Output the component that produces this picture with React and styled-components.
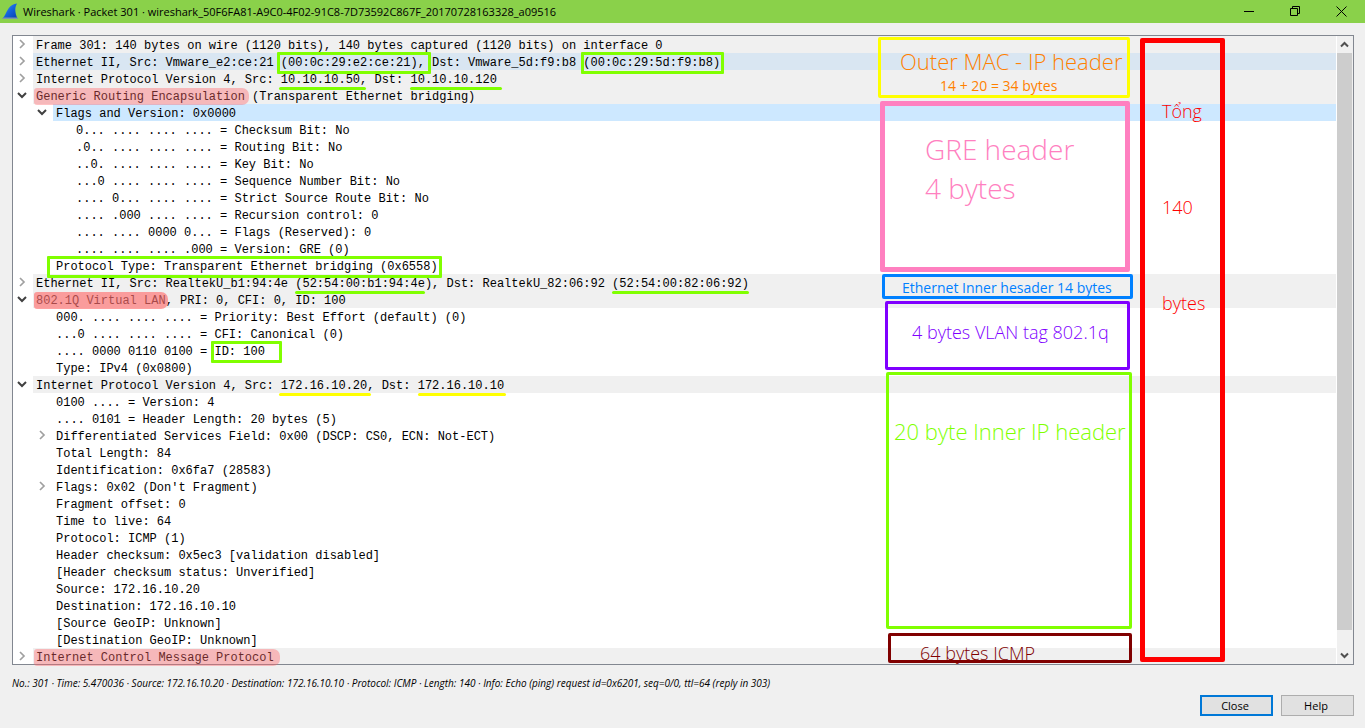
import React from "react";
import styled, { createGlobalStyle } from "styled-components";

const GlobalStyle = createGlobalStyle`
  * { box-sizing: border-box; }
  body { margin: 0; background: #f0f0f0; }
`;

const ui = `"Open Sans", "Noto Sans", sans-serif`;
const LIME = "#80ff00";
const YELLOW = "#ffff00";

const Window = styled.div`
  min-height: 100vh;
  display: flex;
  flex-direction: column;
  background: #f0f0f0;
  color: #000;
  font-family: ${ui};
`;

const TitleBar = styled.header`
  display: flex;
  align-items: center;
  height: 23px;
  padding: 0 1px 0 2px;
  background: #8ad14a;
`;

const Title = styled.h1`
  flex: 1;
  margin: 0 0 0 4px;
  font-size: 11px;
  line-height: 23px;
  font-weight: 400;
  white-space: nowrap;
`;

const CaptionButton = styled.button`
  display: flex;
  align-items: center;
  justify-content: center;
  width: 46px;
  height: 20px;
  padding: 0;
  border: 0;
  background: transparent;
`;

const Main = styled.main`
  display: flex;
  flex-direction: column;
  padding: 12px 11px 0 12px;
`;

const Panel = styled.section`
  position: relative;
  display: flex;
  border: 1px solid #828790;
  background: #fff;
`;

const Tree = styled.ul`
  flex: 1;
  min-width: 0;
  margin: 0 1px 0 0;
  padding: 0;
  list-style: none;
  font-family: "Liberation Mono", monospace;
  font-size: 12px;
`;

const Row = styled.li`
  display: flex;
  height: 17px;
  padding-left: ${(p) => p.$level * 20}px;
  &:last-child { height: 16px; }
`;

const Toggle = styled.button`
  display: flex;
  align-items: center;
  justify-content: center;
  width: 18px;
  height: 16px;
  margin-right: 2px;
  padding: 0;
  border: 0;
  background: transparent;
`;

const Indent = styled.span`
  width: 20px;
`;

const RowText = styled.span`
  flex: 1;
  padding: 3px 0 0 3px;
  line-height: 14px;
  white-space: pre;
  background: ${(p) => p.$fill || "transparent"};
`;

const Mark = styled.span`
  position: relative;
  display: inline-block;
  height: 14px;
  vertical-align: top;
  &::after {
    content: "";
    position: absolute;
    pointer-events: none;
    left: ${(p) => -(p.$left ?? 0)}px;
    right: ${(p) => -(p.$right ?? 0)}px;
  }
`;

const Boxed = styled(Mark)`
  &::after {
    top: -4px;
    bottom: -4px;
    border: 3px solid ${LIME};
    border-radius: 1px;
  }
`;

const Underlined = styled(Mark)`
  &::after {
    bottom: -3px;
    height: 3px;
    border-radius: 2px;
    background: ${(p) => p.$color};
  }
`;

const Highlighted = styled(Mark)`
  &::after {
    top: -2px;
    bottom: -1px;
    border-radius: 3px 7px 7px 3px;
    background: ${(p) => (p.$strong ? "rgba(255,112,112,.66)" : "rgba(255,100,104,.4)")};
  }
`;

const Scrollbar = styled.div`
  display: flex;
  flex-direction: column;
  width: 16px;
  padding-right: 1px;
  background: #f0f0f0;
`;

const ScrollButton = styled.button`
  display: flex;
  align-items: center;
  justify-content: center;
  height: 17px;
  padding: 0;
  border: 0;
  background: transparent;
`;

const ScrollTrack = styled.div`
  flex: 1;
  padding-bottom: 17px;
`;

const ScrollThumb = styled.div`
  height: 100%;
  background: #cdcdcd;
`;

const Note = styled.div`
  position: absolute;
  left: ${(p) => p.$x}px;
  top: ${(p) => p.$y}px;
  width: ${(p) => p.$w}px;
  height: ${(p) => p.$h}px;
  padding: ${(p) => p.$pad};
  border: ${(p) => p.$stroke}px solid ${(p) => p.$color};
  border-radius: 2px;
  color: ${(p) => p.$ink || p.$color};
  white-space: nowrap;
`;

const NoteText = styled.p`
  margin: 0;
  padding-left: ${(p) => p.$indent || 0}px;
  font-size: ${(p) => p.$size}px;
  line-height: ${(p) => p.$line}px;
  font-weight: ${(p) => (p.$size < 16 ? 400 : 300)};
`;

const Summary = styled.p`
  margin: 8px 0 0;
  font-size: 10px;
  line-height: 20px;
  font-style: italic;
  white-space: nowrap;
`;

const Actions = styled.footer`
  display: flex;
  justify-content: flex-end;
  gap: 8px;
  margin-top: 2px;
`;

const PushButton = styled.button`
  width: 73px;
  height: 21px;
  padding: 0 3px 0 0;
  border: ${(p) => (p.$primary ? "2px solid #0078d7" : "1px solid #adadad")};
  background: #e1e1e1;
  color: #000;
  font-family: ${ui};
  font-size: 11px;
  line-height: 17px;
`;

const Chevron = ({ kind }) => {
  const open = kind === "open";
  return (
    <svg width="10" height="10" viewBox="0 0 10 10" fill="none" stroke={open ? "#404040" : "#a0a0a0"} strokeWidth={open ? 2 : 1.7}>
      <path d={open ? "M1 3l4 4 4-4" : "M3 1l4 4-4 4"} />
    </svg>
  );
};

const GREY = "#f0f0f0";
const rows = [
  [0, "closed", "Frame 301: 140 bytes on wire (1120 bits), 140 bytes captured (1120 bits) on interface 0", GREY],
  [0, "closed", <>Ethernet II, Src: Vmware_e2:ce:21 <Boxed $left={4} $right={6}>(00:0c:29:e2:ce:21),</Boxed> Dst: Vmware_5d:f9:b8 <Boxed $left={2} $right={4}>(00:0c:29:5d:f9:b8)</Boxed></>, "#d9e6f2"],
  [0, "closed", <>Internet Protocol Version 4, Src: <Underlined $color={LIME} $left={2} $right={6}>10.10.10.50</Underlined>, Dst: <Underlined $color={LIME} $right={5}>10.10.10.120</Underlined></>, GREY],
  [0, "open", <><Highlighted $left={2} $right={4}>Generic Routing Encapsulation</Highlighted> (Transparent Ethernet bridging)</>, GREY],
  [1, "open", "Flags and Version: 0x0000", "#cde8ff"],
  [2, null, "0... .... .... .... = Checksum Bit: No"],
  [2, null, ".0.. .... .... .... = Routing Bit: No"],
  [2, null, "..0. .... .... .... = Key Bit: No"],
  [2, null, "...0 .... .... .... = Sequence Number Bit: No"],
  [2, null, ".... 0... .... .... = Strict Source Route Bit: No"],
  [2, null, ".... .000 .... .... = Recursion control: 0"],
  [2, null, ".... .... 0000 0... = Flags (Reserved): 0"],
  [2, null, ".... .... .... .000 = Version: GRE (0)"],
  [1, null, <Boxed $left={9} $right={4}>Protocol Type: Transparent Ethernet bridging (0x6558)</Boxed>],
  [0, "closed", <>Ethernet II, Src: RealtekU_b1:94:4e <Underlined $color={LIME}>(52:54:00:b1:94:4e</Underlined>), Dst: RealtekU_82:06:92 <Underlined $color={LIME}>(52:54:00:82:06:92)</Underlined></>, GREY],
  [0, "open", <><Highlighted $strong $left={2} $right={2}>802.1Q Virtual LAN</Highlighted>, PRI: 0, CFI: 0, ID: 100</>, GREY],
  [1, null, "000. .... .... .... = Priority: Best Effort (default) (0)"],
  [1, null, "...0 .... .... .... = CFI: Canonical (0)"],
  [1, null, <>.... 0000 0110 0100 = <Boxed $left={3} $right={17}>ID: 100</Boxed></>],
  [1, null, "Type: IPv4 (0x0800)"],
  [0, "open", <>Internet Protocol Version 4, Src: <Underlined $color={YELLOW} $left={2} $right={4}>172.16.10.20</Underlined>, Dst: <Underlined $color={YELLOW} $right={2}>172.16.10.10</Underlined></>, GREY],
  [1, null, "0100 .... = Version: 4"],
  [1, null, ".... 0101 = Header Length: 20 bytes (5)"],
  [1, "closed", "Differentiated Services Field: 0x00 (DSCP: CS0, ECN: Not-ECT)"],
  [1, null, "Total Length: 84"],
  [1, null, "Identification: 0x6fa7 (28583)"],
  [1, "closed", "Flags: 0x02 (Don't Fragment)"],
  [1, null, "Fragment offset: 0"],
  [1, null, "Time to live: 64"],
  [1, null, "Protocol: ICMP (1)"],
  [1, null, "Header checksum: 0x5ec3 [validation disabled]"],
  [1, null, "[Header checksum status: Unverified]"],
  [1, null, "Source: 172.16.10.20"],
  [1, null, "Destination: 172.16.10.10"],
  [1, null, "[Source GeoIP: Unknown]"],
  [1, null, "[Destination GeoIP: Unknown]"],
  [0, "closed", <Highlighted $left={2} $right={6}>Internet Control Message Protocol</Highlighted>, GREY],
];

export default function App() {
  return (
    <Window>
      <GlobalStyle />
      <TitleBar>
        <svg width="17" height="17" viewBox="0 0 17 17">
          <defs>
            <linearGradient id="fin" x1="0" y1="0" x2="1" y2="1">
              <stop offset="0" stopColor="#4c9bf5" />
              <stop offset="0.5" stopColor="#1464dc" />
              <stop offset="1" stopColor="#0a3fae" />
            </linearGradient>
          </defs>
          <path d="M0.500 15.500C3 13 4 9 6.500 5.500 8.500 2.500 11.500 1 15 0.500 12.800 4 12.500 9 15.500 15.500Z" fill="url(#fin)" />
          <path d="M0 16L1.500 14.500H15L16 16Z" fill="#7d93ad" />
        </svg>
        <Title>Wireshark · Packet 301 · wireshark_50F6FA81-A9C0-4F02-91C8-7D73592C867F_20170728163328_a09516</Title>
        <CaptionButton aria-label="Minimize">
          <svg width="11" height="11" viewBox="0 0 11 11" stroke="#000"><path d="M0 5.500h10" /></svg>
        </CaptionButton>
        <CaptionButton aria-label="Restore">
          <svg width="11" height="11" viewBox="0 0 11 11" fill="none" stroke="#000"><path d="M0.500 2.500h7v7h-7zM2.500 2.500v-2h7v7h-2" /></svg>
        </CaptionButton>
        <CaptionButton aria-label="Close window">
          <svg width="11" height="11" viewBox="0 0 11 11" stroke="#000"><path d="M0.500 0.500l10 10M10.500 0.500l-10 10" /></svg>
        </CaptionButton>
      </TitleBar>
      <Main>
        <Panel>
          <Tree>
            {rows.map(([level, state, text, fill], i) => (
              <Row key={i} $level={level}>
                {state ? (
                  <Toggle aria-label="Toggle branch" aria-expanded={state === "open"}><Chevron kind={state} /></Toggle>
                ) : (
                  <Indent />
                )}
                <RowText $fill={fill}>{text}</RowText>
              </Row>
            ))}
          </Tree>
          <Scrollbar>
            <ScrollButton aria-label="Scroll up">
              <svg width="9" height="7" viewBox="0 0 9 7" fill="none" stroke="#505050" strokeWidth="2"><path d="M1 5.500l3.500-3.500 3.500 3.500" /></svg>
            </ScrollButton>
            <ScrollTrack><ScrollThumb /></ScrollTrack>
            <ScrollButton aria-label="Scroll down">
              <svg width="9" height="7" viewBox="0 0 9 7" fill="none" stroke="#505050" strokeWidth="2"><path d="M1 1.500l3.500 3.500 3.500-3.500" /></svg>
            </ScrollButton>
          </Scrollbar>

          <Note $x={865} $y={1} $w={252} $h={61} $stroke={3} $color={YELLOW} $ink="#ff8000" $pad="6px 0 0 19px">
            <NoteText $size={22} $line={30}>Outer MAC - IP header</NoteText>
            <NoteText $size={14} $line={20} $indent={40}>14 + 20 = 34 bytes</NoteText>
          </Note>
          <Note $x={867} $y={65} $w={250} $h={171} $stroke={5} $color="#ff80c0" $pad="24px 0 0 40px">
            <NoteText $size={28} $line={39}>GRE header</NoteText>
            <NoteText $size={28} $line={39}>4 bytes</NoteText>
          </Note>
          <Note $x={869} $y={238} $w={251} $h={25} $stroke={3} $color="#0080ff" $pad="1px 0 0 17px">
            <NoteText $size={14} $line={20}>Ethernet Inner hesader 14 bytes</NoteText>
          </Note>
          <Note $x={872} $y={265} $w={245} $h={69} $stroke={3} $color="#8000ff" $pad="13px 0 0 24px">
            <NoteText $size={18} $line={30}>4 bytes VLAN tag 802.1q</NoteText>
          </Note>
          <Note $x={873} $y={336} $w={246} $h={257} $stroke={3} $color={LIME} $pad="41px 0 0 5px">
            <NoteText $size={22} $line={30}>20 byte Inner IP header</NoteText>
          </Note>
          <Note $x={875} $y={597} $w={244} $h={30} $stroke={3} $color="#800000" $pad="2px 0 0 29px">
            <NoteText $size={18} $line={30}>64 bytes ICMP</NoteText>
          </Note>
          <Note $x={1127} $y={2} $w={85} $h={624} $stroke={5} $color="#ff0000" $pad="20px 0 0 17px">
            <NoteText $size={18} $line={96}>Tổng</NoteText>
            <NoteText $size={18} $line={96}>140</NoteText>
            <NoteText $size={18} $line={96}>bytes</NoteText>
          </Note>
        </Panel>
        <Summary>No.: 301 · Time: 5.470036 · Source: 172.16.10.20 · Destination: 172.16.10.10 · Protocol: ICMP · Length: 140 · Info: Echo (ping) request id=0x6201, seq=0/0, ttl=64 (reply in 303)</Summary>
        <Actions>
          <PushButton $primary>Close</PushButton>
          <PushButton>Help</PushButton>
        </Actions>
      </Main>
    </Window>
  );
}
